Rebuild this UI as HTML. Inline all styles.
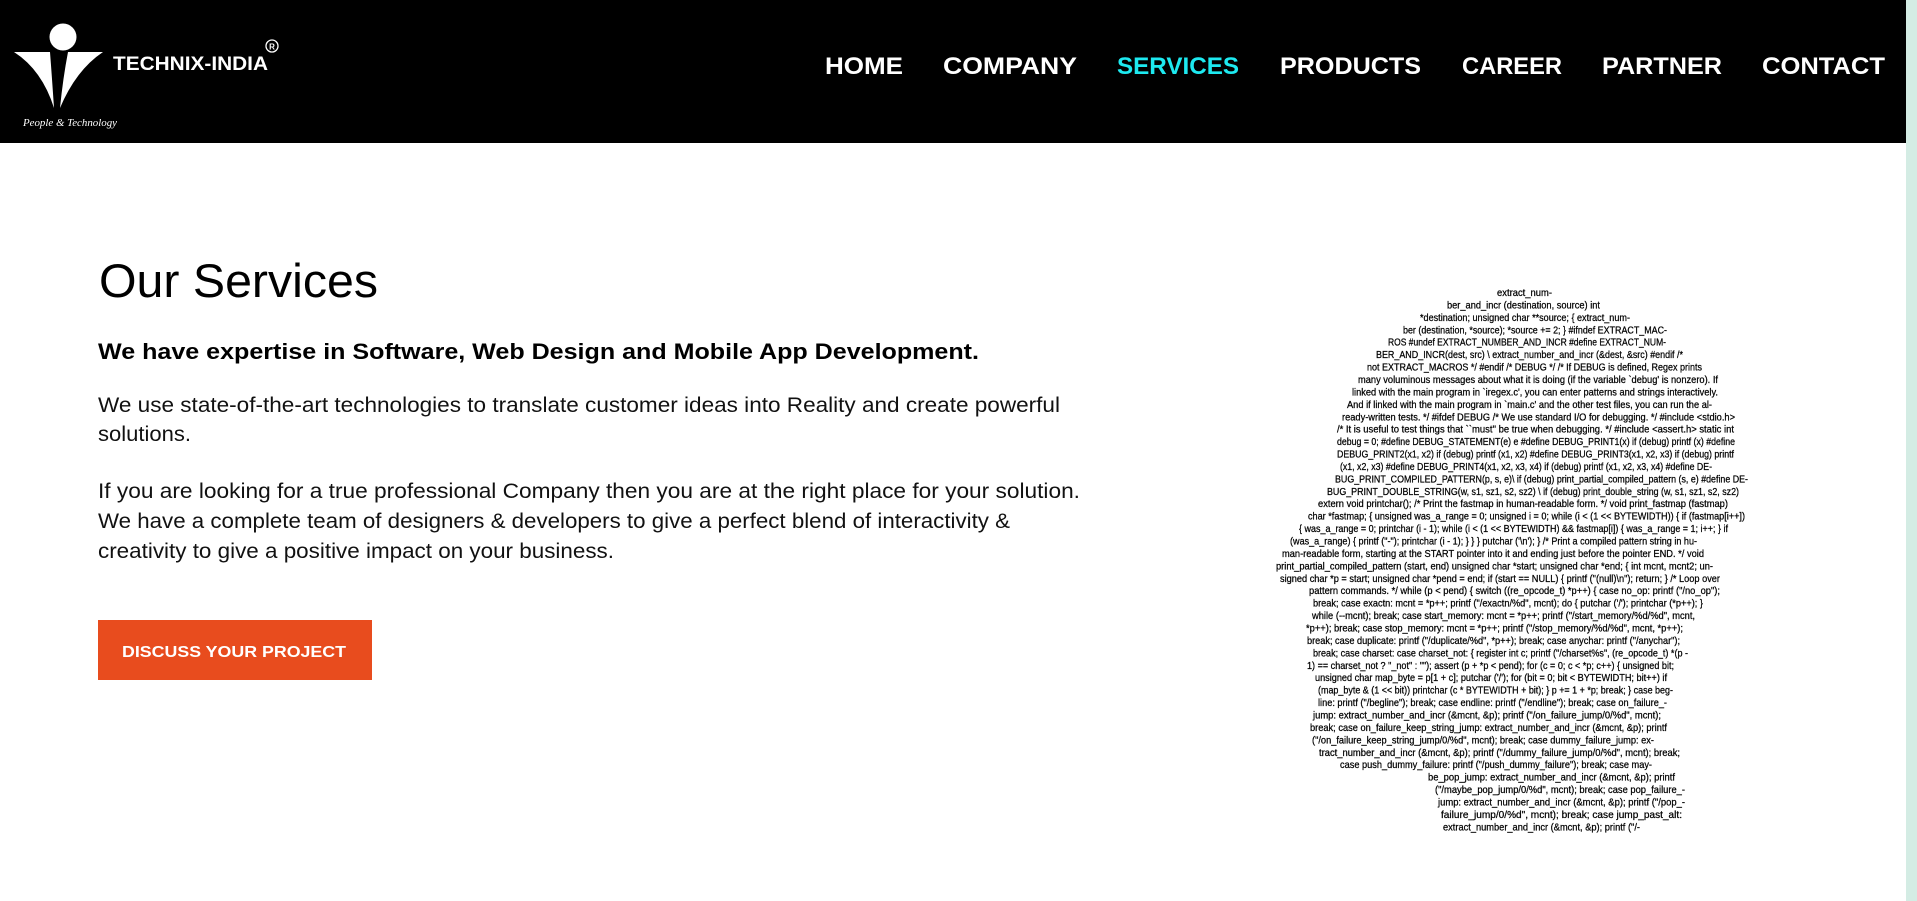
<!DOCTYPE html>
<html><head><meta charset="utf-8"><style>
html,body{margin:0;padding:0;width:1917px;height:901px;overflow:hidden;background:#fff}
svg{display:block}
.code text{font-family:"Liberation Sans",sans-serif;font-size:10.3px;fill:#000;stroke:#000;stroke-width:0.25px}
</style></head><body>
<svg width="1917" height="901" viewBox="0 0 1917 901" xmlns="http://www.w3.org/2000/svg">
<rect x="0" y="0" width="1917" height="901" fill="#fff"/>
<rect x="1906" y="0" width="11" height="901" fill="#d4ece4"/>
<rect x="0" y="0" width="1906" height="143" fill="#000"/>
<!-- logo -->
<circle cx="63" cy="37" r="13.5" fill="#fff"/>
<path d="M14,52 L50,52 Q52,78 54,108 Q42,70 14,52 Z" fill="#fff"/>
<path d="M68,52 L103,52 Q76,70 60,108 Q63,78 68,52 Z" fill="#fff"/>
<text x="113" y="70" font-family="Liberation Sans,sans-serif" font-weight="bold" font-size="19" fill="#fff" textLength="155" lengthAdjust="spacingAndGlyphs">TECHNIX-INDIA</text>
<circle cx="272" cy="46" r="6" fill="none" stroke="#fff" stroke-width="1.3"/>
<text x="272" y="49.5" text-anchor="middle" font-family="Liberation Sans,sans-serif" font-size="8" font-weight="bold" fill="#fff">R</text>
<text x="23" y="126" font-family="Liberation Serif,serif" font-style="italic" font-size="11" fill="#fff" textLength="94" lengthAdjust="spacingAndGlyphs">People &amp; Technology</text>
<!-- nav -->
<g font-family="Liberation Sans,sans-serif" font-weight="bold" font-size="24" fill="#fff">
<text x="825" y="74" textLength="78" lengthAdjust="spacingAndGlyphs">HOME</text>
<text x="943" y="74" textLength="134" lengthAdjust="spacingAndGlyphs">COMPANY</text>
<text x="1117" y="74" textLength="122" lengthAdjust="spacingAndGlyphs" fill="#1de9f0">SERVICES</text>
<text x="1280" y="74" textLength="141" lengthAdjust="spacingAndGlyphs">PRODUCTS</text>
<text x="1462" y="74" textLength="100" lengthAdjust="spacingAndGlyphs">CAREER</text>
<text x="1602" y="74" textLength="120" lengthAdjust="spacingAndGlyphs">PARTNER</text>
<text x="1762" y="74" textLength="123" lengthAdjust="spacingAndGlyphs">CONTACT</text>
</g>
<!-- main -->
<g font-family="Liberation Sans,sans-serif" fill="#000">
<text x="99" y="297" font-size="47" textLength="279" lengthAdjust="spacingAndGlyphs">Our Services</text>
<text x="98" y="359" font-size="22" font-weight="bold" textLength="881" lengthAdjust="spacingAndGlyphs">We have expertise in Software, Web Design and Mobile App Development.</text>
<g font-size="21" fill="#111">
<text x="98" y="412" textLength="962" lengthAdjust="spacingAndGlyphs">We use state-of-the-art technologies to translate customer ideas into Reality and create powerful</text>
<text x="98" y="441" textLength="93" lengthAdjust="spacingAndGlyphs">solutions.</text>
<text x="98" y="498" textLength="982" lengthAdjust="spacingAndGlyphs">If you are looking for a true professional Company then you are at the right place for your solution.</text>
<text x="98" y="528" textLength="912" lengthAdjust="spacingAndGlyphs">We have a complete team of designers &amp; developers to give a perfect blend of interactivity &amp;</text>
<text x="98" y="558" textLength="516" lengthAdjust="spacingAndGlyphs">creativity to give a positive impact on your business.</text>
</g>
</g>
<rect x="98" y="620" width="274" height="60" fill="#e84c1e"/>
<text x="122" y="657" font-family="Liberation Sans,sans-serif" font-weight="bold" font-size="16" fill="#fff" textLength="224" lengthAdjust="spacingAndGlyphs">DISCUSS YOUR PROJECT</text>
<!-- code head -->
<g class="code">
<text x="1497" y="296" textLength="55" lengthAdjust="spacingAndGlyphs">extract_num-</text>
<text x="1447" y="308.4" textLength="153" lengthAdjust="spacingAndGlyphs">ber_and_incr (destination, source) int</text>
<text x="1420" y="320.8" textLength="210" lengthAdjust="spacingAndGlyphs">*destination; unsigned char **source; {  extract_num-</text>
<text x="1403" y="333.3" textLength="264" lengthAdjust="spacingAndGlyphs">ber (destination, *source); *source += 2; } #ifndef EXTRACT_MAC-</text>
<text x="1388" y="345.7" textLength="278" lengthAdjust="spacingAndGlyphs">ROS #undef EXTRACT_NUMBER_AND_INCR #define EXTRACT_NUM-</text>
<text x="1376" y="358.1" textLength="307" lengthAdjust="spacingAndGlyphs">BER_AND_INCR(dest, src) \ extract_number_and_incr (&amp;dest, &amp;src) #endif /*</text>
<text x="1367" y="370.5" textLength="335" lengthAdjust="spacingAndGlyphs">not EXTRACT_MACROS */ #endif /* DEBUG */ /* If DEBUG is defined, Regex prints</text>
<text x="1358" y="383" textLength="360" lengthAdjust="spacingAndGlyphs">many voluminous messages about what it is doing (if the variable `debug' is nonzero).  If</text>
<text x="1352" y="395.4" textLength="366" lengthAdjust="spacingAndGlyphs">linked with the main program in `iregex.c', you can enter patterns and strings interactively.</text>
<text x="1347" y="407.8" textLength="365" lengthAdjust="spacingAndGlyphs">And if linked with the main program in `main.c' and the other test files, you can run the al-</text>
<text x="1342" y="420.3" textLength="393" lengthAdjust="spacingAndGlyphs">ready-written tests.  */ #ifdef DEBUG /* We use standard I/O for debugging.  */ #include &lt;stdio.h&gt;</text>
<text x="1337" y="432.7" textLength="397" lengthAdjust="spacingAndGlyphs">/* It is useful to test things that ``must'' be true when debugging.  */ #include &lt;assert.h&gt; static int</text>
<text x="1337" y="445.1" textLength="398" lengthAdjust="spacingAndGlyphs">debug = 0; #define DEBUG_STATEMENT(e) e #define DEBUG_PRINT1(x) if (debug) printf (x) #define</text>
<text x="1337" y="457.5" textLength="397" lengthAdjust="spacingAndGlyphs">DEBUG_PRINT2(x1, x2) if (debug) printf (x1, x2) #define DEBUG_PRINT3(x1, x2, x3) if (debug) printf</text>
<text x="1340" y="470" textLength="372" lengthAdjust="spacingAndGlyphs">(x1, x2, x3) #define DEBUG_PRINT4(x1, x2, x3, x4) if (debug) printf (x1, x2, x3, x4) #define DE-</text>
<text x="1335" y="482.4" textLength="413" lengthAdjust="spacingAndGlyphs">BUG_PRINT_COMPILED_PATTERN(p, s, e)\ if (debug) print_partial_compiled_pattern (s, e) #define DE-</text>
<text x="1327" y="494.8" textLength="412" lengthAdjust="spacingAndGlyphs">BUG_PRINT_DOUBLE_STRING(w, s1, sz1, s2, sz2)      \ if (debug) print_double_string (w, s1, sz1, s2, sz2)</text>
<text x="1318" y="507.2" textLength="410" lengthAdjust="spacingAndGlyphs">extern void printchar(); /* Print the fastmap in human-readable form.  */ void print_fastmap (fastmap)</text>
<text x="1308" y="519.7" textLength="437" lengthAdjust="spacingAndGlyphs">char *fastmap; { unsigned was_a_range = 0; unsigned i = 0;   while (i &lt; (1 &lt;&lt; BYTEWIDTH)) { if (fastmap[i++])</text>
<text x="1299" y="532.1" textLength="429" lengthAdjust="spacingAndGlyphs">{ was_a_range = 0; printchar (i - 1); while (i &lt; (1 &lt;&lt; BYTEWIDTH)  &amp;&amp;  fastmap[i]) { was_a_range = 1; i++; } if</text>
<text x="1290" y="544.5" textLength="407" lengthAdjust="spacingAndGlyphs">(was_a_range) { printf ("-"); printchar (i - 1); } } } putchar ('\n');  } /* Print a compiled pattern string in hu-</text>
<text x="1282" y="557" textLength="422" lengthAdjust="spacingAndGlyphs">man-readable form, starting at the START pointer into it and ending just before the pointer END.  */ void</text>
<text x="1276" y="569.4" textLength="437" lengthAdjust="spacingAndGlyphs">print_partial_compiled_pattern (start, end) unsigned char *start; unsigned char *end; { int mcnt, mcnt2; un-</text>
<text x="1280" y="581.8" textLength="440" lengthAdjust="spacingAndGlyphs">signed char *p = start; unsigned char *pend = end; if (start == NULL) { printf ("(null)\n"); return; } /* Loop over</text>
<text x="1309" y="594.2" textLength="411" lengthAdjust="spacingAndGlyphs">pattern commands.  */ while (p &lt; pend) { switch ((re_opcode_t) *p++) { case no_op: printf ("/no_op");</text>
<text x="1313" y="606.7" textLength="390" lengthAdjust="spacingAndGlyphs">break; case exactn: mcnt = *p++; printf ("/exactn/%d", mcnt); do { putchar ('/'); printchar (*p++); }</text>
<text x="1312" y="619.1" textLength="383" lengthAdjust="spacingAndGlyphs">while (--mcnt); break; case start_memory: mcnt = *p++; printf ("/start_memory/%d/%d", mcnt,</text>
<text x="1306" y="631.5" textLength="377" lengthAdjust="spacingAndGlyphs">*p++); break; case stop_memory: mcnt = *p++; printf ("/stop_memory/%d/%d", mcnt, *p++);</text>
<text x="1307" y="644" textLength="373" lengthAdjust="spacingAndGlyphs">break; case duplicate: printf ("/duplicate/%d", *p++); break; case anychar: printf ("/anychar");</text>
<text x="1313" y="656.4" textLength="375" lengthAdjust="spacingAndGlyphs">break; case charset: case charset_not: { register int c; printf ("/charset%s", (re_opcode_t) *(p -</text>
<text x="1307" y="668.8" textLength="367" lengthAdjust="spacingAndGlyphs">1) == charset_not ? "_not" : ""); assert (p + *p &lt; pend); for (c = 0; c &lt; *p; c++) { unsigned bit;</text>
<text x="1315" y="681.2" textLength="352" lengthAdjust="spacingAndGlyphs">unsigned char map_byte = p[1 + c]; putchar ('/'); for (bit = 0; bit &lt; BYTEWIDTH; bit++) if</text>
<text x="1318" y="693.7" textLength="355" lengthAdjust="spacingAndGlyphs">(map_byte &amp; (1 &lt;&lt; bit)) printchar (c * BYTEWIDTH + bit); } p += 1 + *p; break; } case beg-</text>
<text x="1318" y="706.1" textLength="349" lengthAdjust="spacingAndGlyphs">line: printf ("/begline"); break; case endline: printf ("/endline"); break; case on_failure_-</text>
<text x="1313" y="718.5" textLength="348" lengthAdjust="spacingAndGlyphs">jump: extract_number_and_incr (&amp;mcnt, &amp;p); printf ("/on_failure_jump/0/%d", mcnt);</text>
<text x="1310" y="731" textLength="357" lengthAdjust="spacingAndGlyphs">break; case on_failure_keep_string_jump: extract_number_and_incr (&amp;mcnt, &amp;p); printf</text>
<text x="1312" y="743.4" textLength="342" lengthAdjust="spacingAndGlyphs">("/on_failure_keep_string_jump/0/%d", mcnt); break; case dummy_failure_jump: ex-</text>
<text x="1319" y="755.8" textLength="361" lengthAdjust="spacingAndGlyphs">tract_number_and_incr (&amp;mcnt, &amp;p); printf ("/dummy_failure_jump/0/%d", mcnt); break;</text>
<text x="1340" y="768.2" textLength="312" lengthAdjust="spacingAndGlyphs">case push_dummy_failure: printf ("/push_dummy_failure"); break; case may-</text>
<text x="1428" y="780.7" textLength="247" lengthAdjust="spacingAndGlyphs">be_pop_jump: extract_number_and_incr (&amp;mcnt, &amp;p); printf</text>
<text x="1435" y="793.1" textLength="250" lengthAdjust="spacingAndGlyphs">("/maybe_pop_jump/0/%d", mcnt); break; case pop_failure_-</text>
<text x="1438" y="805.5" textLength="247" lengthAdjust="spacingAndGlyphs">jump: extract_number_and_incr (&amp;mcnt, &amp;p); printf ("/pop_-</text>
<text x="1441" y="818" textLength="241" lengthAdjust="spacingAndGlyphs">failure_jump/0/%d", mcnt); break;          case jump_past_alt:</text>
<text x="1443" y="830.4" textLength="197" lengthAdjust="spacingAndGlyphs">extract_number_and_incr (&amp;mcnt, &amp;p); printf ("/-</text>
</g>
</svg>
</body></html>
